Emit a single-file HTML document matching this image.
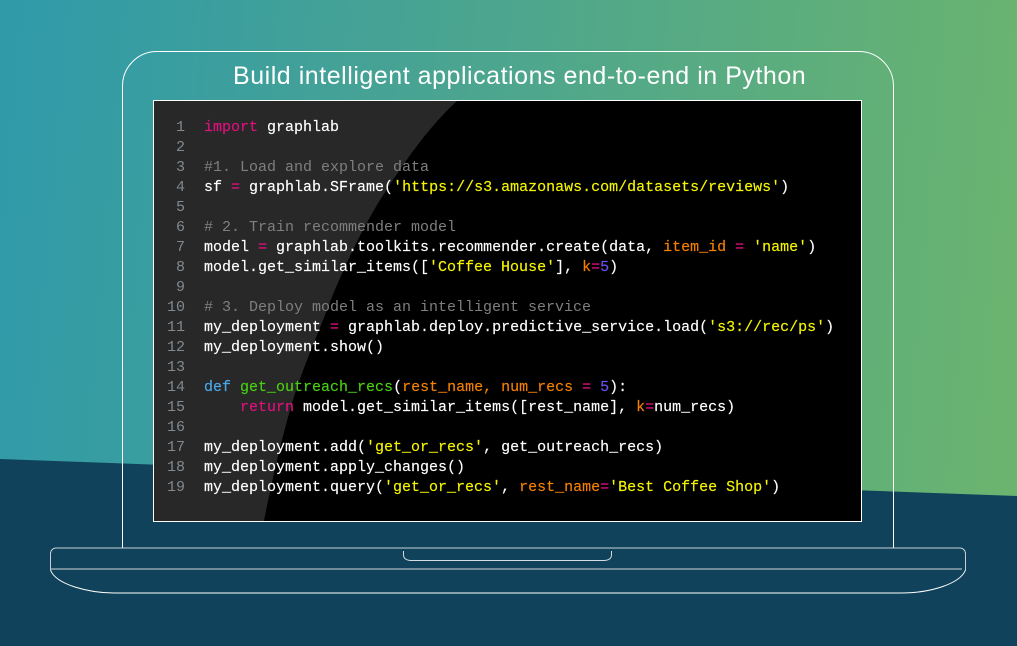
<!DOCTYPE html>
<html><head><meta charset="utf-8"><style>
html,body{margin:0;padding:0;width:1017px;height:646px;overflow:hidden}
body{position:relative;background:linear-gradient(95deg,#2f9aaa 0%,#45a295 35%,#5aac80 70%,#6cb56e 100%)}
svg{position:absolute;left:0;top:0}
h1{position:absolute;left:233px;top:62px;margin:0;font:400 25px/28px "Liberation Sans",sans-serif;color:#fff;white-space:nowrap;letter-spacing:.53px}
pre{position:absolute;margin:0;font:400 15px/20px "Liberation Mono",monospace;color:#fff;white-space:pre;-webkit-text-stroke:.15px currentColor}
#n{left:155px;width:30px;top:118px;text-align:right;color:#808a90;-webkit-text-stroke:0}
#c{left:204px;top:118px}
.k{color:#e0107f}.c{color:#7f7f7f;-webkit-text-stroke:0}.s{color:#f5f500}.o{color:#f58000}.p{color:#6a50f0}.b{color:#4aa8e8}.g{color:#48d010}
</style></head><body>
<svg width="1017" height="646" viewBox="0 0 1017 646">
<polygon points="0,459 1017,496 1017,646 0,646" fill="#10435b"/>
<path d="M122.5 548V86A34.500 34.500 0 0 1 157 51.500H859A34.500 34.500 0 0 1 893.500 86V548" fill="none" stroke="#fff" stroke-width="1"/>
<rect x="153.500" y="100.500" width="708" height="421" fill="#000" stroke="#fff" stroke-width="1"/>
<path d="M154 101H457C425 130 398 172 380 200C358 236 338 280 325 315C311 350 299 378 290 410C280 445 270 490 264 521H154Z" fill="#282828"/>
<path d="M50.500 570V553.500A5.500 5.500 0 0 1 56 548H960A5.500 5.500 0 0 1 965.500 553.500V570" fill="none" stroke="#c4d0d5" stroke-width="1"/>
<path d="M50.500 570C56 585 90 593 114 593H901C930 593 960 584 965.500 570" fill="none" stroke="#fff" stroke-width="1"/>
<path d="M51 569H962" stroke="#8fa5af" stroke-width="1.500" fill="none"/>
<path d="M403.500 551V555C403.500 558 406 560.500 411 560.500H604C609 560.500 611.500 558 611.500 555V551" fill="none" stroke="#d5dde0" stroke-width="1"/>
</svg>
<h1>Build intelligent applications end-to-end in Python</h1>
<pre id="n">1
2
3
4
5
6
7
8
9
10
11
12
13
14
15
16
17
18
19</pre>
<pre id="c"><span class="k">import</span> graphlab

<span class="c">#1. Load and explore data</span>
sf <span class="k">=</span> graphlab.SFrame(<span class="s">'https://s3.amazonaws.com/datasets/reviews'</span>)

<span class="c"># 2. Train recommender model</span>
model <span class="k">=</span> graphlab.toolkits.recommender.create(data, <span class="o">item_id</span> <span class="k">=</span> <span class="s">'name'</span>)
model.get_similar_items([<span class="s">'Coffee House'</span>], <span class="o">k</span><span class="k">=</span><span class="p">5</span>)

<span class="c"># 3. Deploy model as an intelligent service</span>
my_deployment <span class="k">=</span> graphlab.deploy.predictive_service.load(<span class="s">'s3://rec/ps'</span>)
my_deployment.show()

<span class="b">def</span> <span class="g">get_outreach_recs</span>(<span class="o">rest_name, num_recs</span> <span class="k">=</span> <span class="p">5</span>):
    <span class="k">return</span> model.get_similar_items([rest_name], <span class="o">k</span><span class="k">=</span>num_recs)

my_deployment.add(<span class="s">'get_or_recs'</span>, get_outreach_recs)
my_deployment.apply_changes()
my_deployment.query(<span class="s">'get_or_recs'</span>, <span class="o">rest_name</span><span class="k">=</span><span class="s">'Best Coffee Shop'</span>)</pre>
</body></html>
